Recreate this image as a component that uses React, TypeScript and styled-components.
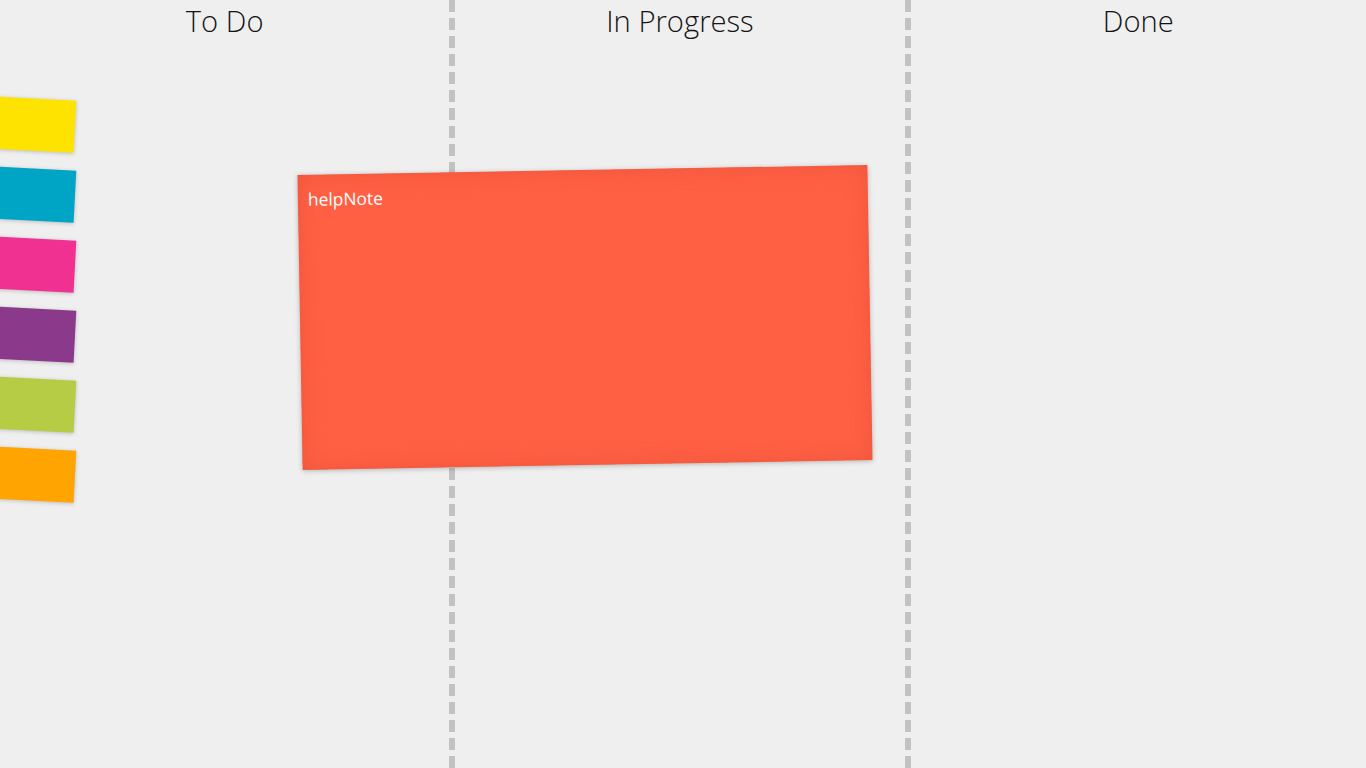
import React from "react";
import styled, { createGlobalStyle } from "styled-components";

const Global = createGlobalStyle`
  html, body, #root { margin: 0; padding: 0; height: 100%; }
  body { background: #efefef; overflow: hidden; font-family: "Open Sans", "Segoe UI", sans-serif; }
`;

const Board = styled.div`
  position: relative;
  display: grid;
  grid-template-columns: repeat(3, 1fr);
  width: 100vw;
  height: 100vh;
  background: #efefef;
`;

const Column = styled.section<{ $divider?: boolean }>`
  position: relative;
  display: flex;
  flex-direction: column;
  align-items: center;
  box-sizing: border-box;
  padding-right: ${(p) => (p.$divider ? "6px" : "0")};
  &::after {
    content: "";
    display: ${(p) => (p.$divider ? "block" : "none")};
    position: absolute;
    top: 0;
    right: 0;
    width: 6px;
    height: 100%;
    background: repeating-linear-gradient(
      to bottom,
      #c2c2c2 0px,
      #c2c2c2 12px,
      transparent 12px,
      transparent 18px
    );
  }
`;

const Title = styled.h2`
  margin: 0;
  padding-top: 2px;
  font-family: "Open Sans", "Segoe UI", sans-serif;
  font-weight: 300;
  font-size: 29.2px;
  line-height: 38px;
  color: #141414;
  width: 100%;
  text-align: center;
`;

const Palette = styled.div`
  position: absolute;
  left: -31px;
  top: 98px;
  display: flex;
  flex-direction: column;
  gap: 18px;
`;

const Swatch = styled.div<{ $color: string }>`
  width: 106px;
  height: 52px;
  background: ${(p) => p.$color};
  transform: rotate(3deg);
  box-shadow: 0 1px 4px rgba(0, 0, 0, 0.22);
`;

const Note = styled.div<{ $color: string }>`
  position: absolute;
  left: 300px;
  top: 170px;
  width: 570px;
  height: 295px;
  box-sizing: border-box;
  padding: 14px 10px;
  background: ${(p) => p.$color};
  transform: rotate(-1deg);
  box-shadow: 0 1px 5px rgba(0, 0, 0, 0.25), inset 0 0 22px rgba(160, 40, 20, 0.18);
  color: #fff;
  font-family: "Open Sans", "Segoe UI", sans-serif;
  font-size: 17.4px;
  line-height: 20px;
`;

const swatches = ["#ffe300", "#00a4c4", "#f03192", "#8b3a8b", "#b6cc44", "#ffa400"];

export default function App() {
  return (
    <>
      <Global />
      <Board>
        <Column $divider>
          <Title>To Do</Title>
        </Column>
        <Column $divider>
          <Title>In Progress</Title>
        </Column>
        <Column>
          <Title>Done</Title>
        </Column>
        <Palette>
          {swatches.map((c) => (
            <Swatch key={c} $color={c} />
          ))}
        </Palette>
        <Note $color="#ff6044">helpNote</Note>
      </Board>
    </>
  );
}
